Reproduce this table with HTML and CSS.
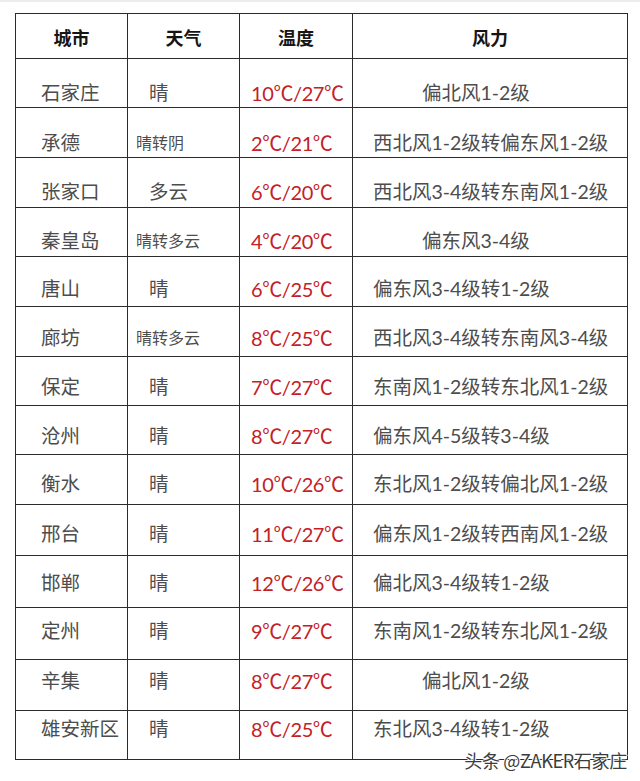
FILE: index.html
```html
<!DOCTYPE html>
<html lang="zh-CN">
<head>
<meta charset="utf-8">
<title>河北天气</title>
<link rel="stylesheet" href="styles.css">
</head>
<body>
<div class="page">
  <div class="topline"></div>
  <div class="sheet">
    <div class="grid">
      <div class="cell head">城市</div>
      <div class="cell head">天气</div>
      <div class="cell head">温度</div>
      <div class="cell head">风力</div>

      <div class="cell city r1">石家庄</div>
      <div class="cell wx r1">晴</div>
      <div class="cell temp r1">10℃/27℃</div>
      <div class="cell wind r1 mid">偏北风1-2级</div>

      <div class="cell city r2">承德</div>
      <div class="cell wx small r2">晴转阴</div>
      <div class="cell temp r2">2℃/21℃</div>
      <div class="cell wind r2">西北风1-2级转偏东风1-2级</div>

      <div class="cell city r3">张家口</div>
      <div class="cell wx r3">多云</div>
      <div class="cell temp r3">6℃/20℃</div>
      <div class="cell wind r3">西北风3-4级转东南风1-2级</div>

      <div class="cell city r4">秦皇岛</div>
      <div class="cell wx small r4">晴转多云</div>
      <div class="cell temp r4">4℃/20℃</div>
      <div class="cell wind r4 mid">偏东风3-4级</div>

      <div class="cell city r5">唐山</div>
      <div class="cell wx r5">晴</div>
      <div class="cell temp r5">6℃/25℃</div>
      <div class="cell wind r5">偏东风3-4级转1-2级</div>

      <div class="cell city r6">廊坊</div>
      <div class="cell wx small r6">晴转多云</div>
      <div class="cell temp r6">8℃/25℃</div>
      <div class="cell wind r6">西北风3-4级转东南风3-4级</div>

      <div class="cell city r7">保定</div>
      <div class="cell wx r7">晴</div>
      <div class="cell temp r7">7℃/27℃</div>
      <div class="cell wind r7">东南风1-2级转东北风1-2级</div>

      <div class="cell city r8">沧州</div>
      <div class="cell wx r8">晴</div>
      <div class="cell temp r8">8℃/27℃</div>
      <div class="cell wind r8">偏东风4-5级转3-4级</div>

      <div class="cell city r9">衡水</div>
      <div class="cell wx r9">晴</div>
      <div class="cell temp r9">10℃/26℃</div>
      <div class="cell wind r9">东北风1-2级转偏北风1-2级</div>

      <div class="cell city r10">邢台</div>
      <div class="cell wx r10">晴</div>
      <div class="cell temp r10">11℃/27℃</div>
      <div class="cell wind r10">偏东风1-2级转西南风1-2级</div>

      <div class="cell city r11">邯郸</div>
      <div class="cell wx r11">晴</div>
      <div class="cell temp r11">12℃/26℃</div>
      <div class="cell wind r11">偏北风3-4级转1-2级</div>

      <div class="cell city r12">定州</div>
      <div class="cell wx r12">晴</div>
      <div class="cell temp r12">9℃/27℃</div>
      <div class="cell wind r12">东南风1-2级转东北风1-2级</div>

      <div class="cell city r13">辛集</div>
      <div class="cell wx r13">晴</div>
      <div class="cell temp r13">8℃/27℃</div>
      <div class="cell wind r13 mid">偏北风1-2级</div>

      <div class="cell city r14">雄安新区</div>
      <div class="cell wx r14">晴</div>
      <div class="cell temp r14">8℃/25℃</div>
      <div class="cell wind r14">东北风3-4级转1-2级</div>
    </div>
    <div class="watermark">头条 @ZAKER石家庄</div>
  </div>
</div>
</body>
</html>
```

FILE: styles.css
```css
html, body {
  margin: 0;
  padding: 0;
  background: #ffffff;
}

.page {
  width: 640px;
  height: 781px;
  position: relative;
  overflow: hidden;
  background: #ffffff;
}

.topline {
  height: 2px;
  background: #ececec;
}

.sheet {
  position: relative;
  margin: 11px 0 0 15px;
  width: 613px;
}

.grid {
  display: grid;
  grid-template-columns: 112px 112px 113px 275px;
  grid-template-rows: 45px 49px 50px 50px 49px 50px 50px 49px 49px 50px 51px 52px 52px 51px 49px;
  border-top: 1px solid #2b2b2b;
  border-left: 1px solid #2b2b2b;
}

.cell {
  box-sizing: border-box;
  border-right: 1px solid #2b2b2b;
  border-bottom: 1px solid #2b2b2b;
  font-family: "Lato", "Noto Sans CJK SC", sans-serif;
  font-size: 19.5px;
  line-height: 20px;
  color: #4d4d4d;
  white-space: nowrap;
  overflow: hidden;
}

.head {
  font-family: "Noto Sans CJK SC", sans-serif;
  font-weight: 700;
  font-size: 18px;
  color: #151515;
  text-align: center;
  padding-top: 13px;
}

.city {
  padding-left: 25px;
}

.wx {
  padding-left: 21px;
}

.wx.small {
  font-size: 16px;
  padding-left: 8px;
}

.temp {
  padding-left: 11px;
  font-size: 20px;
  letter-spacing: -0.4px;
  color: #c42026;
}

.wind {
  padding-left: 20px;
  font-size: 19.5px;
}

.wind.mid {
  padding-left: 69px;
}

.r1 { padding-top: 24px; }
.r2 { padding-top: 25px; }
.r3 { padding-top: 24px; }
.r4 { padding-top: 23px; }
.r5 { padding-top: 22px; }
.r6 { padding-top: 21px; }
.r7 { padding-top: 20px; }
.r8 { padding-top: 20px; }
.r9 { padding-top: 19px; }
.r10 { padding-top: 19px; }
.r11 { padding-top: 17px; }
.r12 { padding-top: 13px; }
.r13 { padding-top: 11px; }
.r14 { padding-top: 8px; }

.watermark {
  position: absolute;
  right: 1px;
  bottom: -10px;
  font-family: "Noto Sans CJK SC", sans-serif;
  font-size: 18px;
  line-height: 20px;
  color: #3c3c3c;
  letter-spacing: -0.3px;
  text-shadow: 1px 0 0 #fff, -1px 0 0 #fff, 0 1px 0 #fff, 0 -1px 0 #fff;
}
```
